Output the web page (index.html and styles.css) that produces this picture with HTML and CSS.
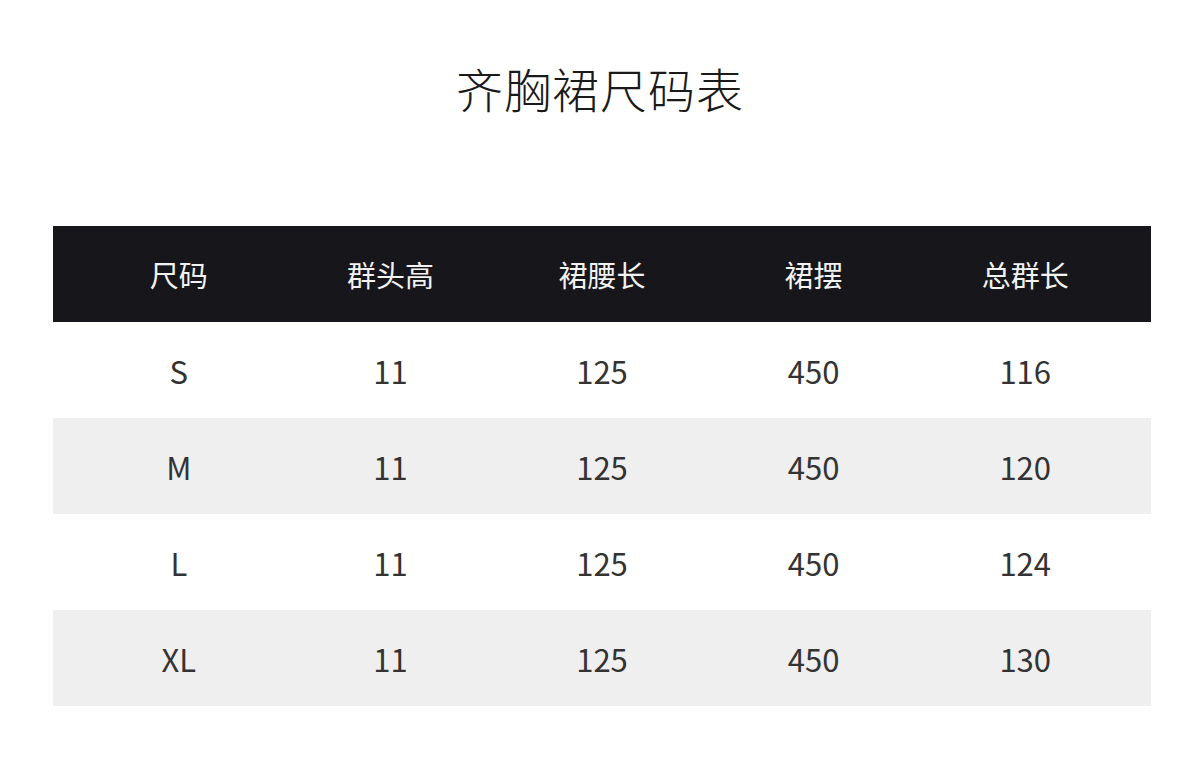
FILE: index.html
```html
<!DOCTYPE html>
<html lang="zh-CN">
<head>
<meta charset="utf-8">
<title>齐胸裙尺码表</title>
<link rel="stylesheet" href="styles.css">
</head>
<body>
<div class="page">
  <h1 class="title">齐胸裙尺码表</h1>
  <div class="table">
    <div class="row head">
      <div class="cell">尺码</div>
      <div class="cell">群头高</div>
      <div class="cell">裙腰长</div>
      <div class="cell">裙摆</div>
      <div class="cell">总群长</div>
    </div>
    <div class="row">
      <div class="cell">S</div>
      <div class="cell">11</div>
      <div class="cell">125</div>
      <div class="cell">450</div>
      <div class="cell">116</div>
    </div>
    <div class="row alt">
      <div class="cell">M</div>
      <div class="cell">11</div>
      <div class="cell">125</div>
      <div class="cell">450</div>
      <div class="cell">120</div>
    </div>
    <div class="row">
      <div class="cell">L</div>
      <div class="cell">11</div>
      <div class="cell">125</div>
      <div class="cell">450</div>
      <div class="cell">124</div>
    </div>
    <div class="row alt">
      <div class="cell">XL</div>
      <div class="cell">11</div>
      <div class="cell">125</div>
      <div class="cell">450</div>
      <div class="cell">130</div>
    </div>
  </div>
</div>
</body>
</html>
```
FILE: styles.css
```css
html, body {
  margin: 0;
  padding: 0;
  background: #ffffff;
}
body {
  font-family: "Noto Sans CJK SC", "Noto Sans", sans-serif;
  color: #2a2a2a;
}
.page {
  width: 1200px;
  height: 784px;
  padding-top: 63px;
  box-sizing: border-box;
}
.title {
  margin: 0;
  text-align: center;
  font-size: 47px;
  line-height: 50px;
  font-weight: 300;
  color: #1a1a1a;
  letter-spacing: 1px;
}
.table {
  margin: 113px 0 0 53px;
  width: 1098px;
}
.row {
  display: grid;
  grid-template-columns: repeat(5, 1fr);
  padding: 0 20px;
  height: 96px;
  align-items: center;
  background: #ffffff;
}
.row.alt {
  background: #efefef;
}
.row.head {
  background: #17161b;
  color: #f2f2f2;
}
.cell {
  text-align: center;
  font-size: 31px;
  font-weight: 400;
  color: #333333;
}
.head .cell {
  font-size: 29px;
  font-weight: 400;
  color: #f2f2f2;
}
```
